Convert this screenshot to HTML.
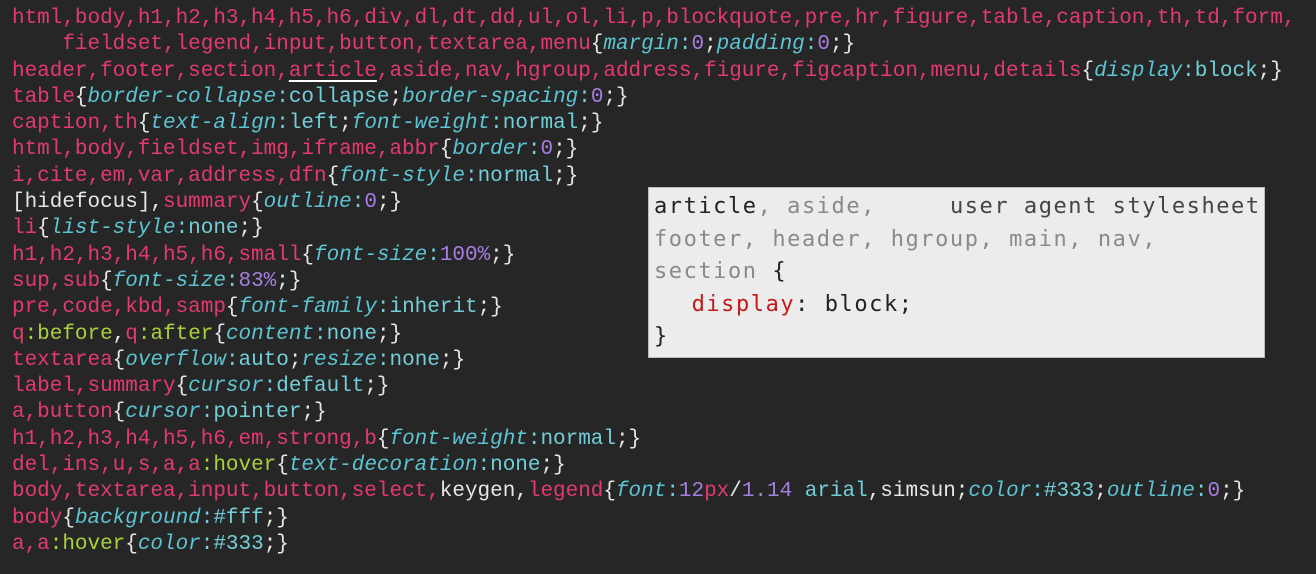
<!DOCTYPE html>
<html><head><meta charset="utf-8"><style>
html,body{margin:0;padding:0;background:#262626;width:1316px;height:574px;overflow:hidden}
pre{margin:0;position:absolute;left:12px;top:6px;font-family:"Liberation Mono",monospace;font-size:21px;line-height:26.3px;color:#e6e6e6;letter-spacing:-0.02px}
.s{color:#e33a6e}.p{color:#5cc4d2;font-style:italic}.v{color:#72cfd9}.n{color:#a57ee0}.g{color:#a9d13a}.w{color:#e6e6e6}
.u{text-decoration:underline;text-decoration-color:#fff;text-underline-offset:4px}
.tip{position:absolute;left:648px;top:187px;width:617px;height:171px;background:#ececec;border:1px solid #bbb;box-sizing:border-box}
.tip pre{position:absolute;left:5px;top:3px;font-family:"DejaVu Sans Mono","Liberation Mono",monospace;font-size:22px;line-height:32.5px;color:#222;letter-spacing:1.55px}
.gr{color:#8a8a8a}.rd{color:#c41a1a}
</style></head><body>
<pre><span class="s">html,body,h1,h2,h3,h4,h5,h6,div,dl,dt,dd,ul,ol,li,p,blockquote,pre,hr,figure,table,caption,th,td,form,</span>
    <span class="s">fieldset,legend,input,button,textarea,menu</span>{<span class="p">margin</span><span class="v">:</span><span class="n">0</span>;<span class="p">padding</span><span class="v">:</span><span class="n">0</span>;}
<span class="s">header,footer,section,<span class="u">article</span>,aside,nav,hgroup,address,figure,figcaption,menu,details</span>{<span class="p">display</span><span class="v">:block</span>;}
<span class="s">table</span>{<span class="p">border-collapse</span><span class="v">:collapse</span>;<span class="p">border-spacing</span><span class="v">:</span><span class="n">0</span>;}
<span class="s">caption,th</span>{<span class="p">text-align</span><span class="v">:left</span>;<span class="p">font-weight</span><span class="v">:normal</span>;}
<span class="s">html,body,fieldset,img,iframe,abbr</span>{<span class="p">border</span><span class="v">:</span><span class="n">0</span>;}
<span class="s">i,cite,em,var,address,dfn</span>{<span class="p">font-style</span><span class="v">:normal</span>;}
[hidefocus],<span class="s">summary</span>{<span class="p">outline</span><span class="v">:</span><span class="n">0</span>;}
<span class="s">li</span>{<span class="p">list-style</span><span class="v">:none</span>;}
<span class="s">h1,h2,h3,h4,h5,h6,small</span>{<span class="p">font-size</span><span class="v">:</span><span class="n">100%</span>;}
<span class="s">sup,sub</span>{<span class="p">font-size</span><span class="v">:</span><span class="n">83%</span>;}
<span class="s">pre,code,kbd,samp</span>{<span class="p">font-family</span><span class="v">:inherit</span>;}
<span class="s">q</span><span class="g">:before</span>,<span class="s">q</span><span class="g">:after</span>{<span class="p">content</span><span class="v">:none</span>;}
<span class="s">textarea</span>{<span class="p">overflow</span><span class="v">:auto</span>;<span class="p">resize</span><span class="v">:none</span>;}
<span class="s">label,summary</span>{<span class="p">cursor</span><span class="v">:default</span>;}
<span class="s">a,button</span>{<span class="p">cursor</span><span class="v">:pointer</span>;}
<span class="s">h1,h2,h3,h4,h5,h6,em,strong,b</span>{<span class="p">font-weight</span><span class="v">:normal</span>;}
<span class="s">del,ins,u,s,a,a</span><span class="g">:hover</span>{<span class="p">text-decoration</span><span class="v">:none</span>;}
<span class="s">body,textarea,input,button,select,</span>keygen,<span class="s">legend</span>{<span class="p">font</span><span class="v">:</span><span class="n">12</span><span class="s">px</span>/<span class="n">1.14</span> <span class="v">arial</span>,simsun;<span class="p">color</span><span class="v">:#333</span>;<span class="p">outline</span><span class="v">:</span><span class="n">0</span>;}
<span class="s">body</span>{<span class="p">background</span><span class="v">:#fff</span>;}
<span class="s">a,a</span><span class="g">:hover</span>{<span class="p">color</span><span class="v">:#333</span>;}</pre>
<div class="tip"><pre>article<span class="gr">, aside,</span>     <span style="color:#444">user agent stylesheet</span>
<span class="gr">footer, header, hgroup, main, nav,</span>
<span class="gr">section</span> {
  <span class="rd" style="margin-left:8px">display</span>: block;
}</pre></div>
</body></html>
